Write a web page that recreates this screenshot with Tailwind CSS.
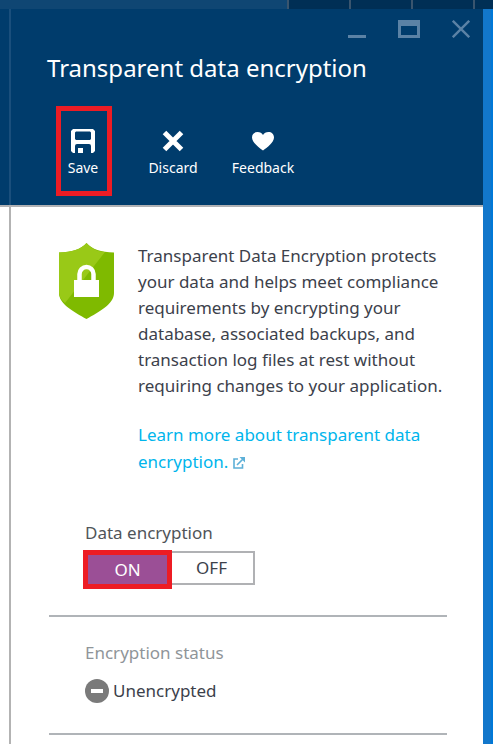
<!DOCTYPE html>
<html lang="en">
<head>
<meta charset="utf-8">
<meta name="viewport" content="width=device-width, initial-scale=1">
<title>Transparent data encryption</title>
<script src="https://cdn.jsdelivr.net/npm/@tailwindcss/browser@4"></script>
</head>
<body class="min-h-screen flex flex-col bg-white font-['Noto_Sans',sans-serif] text-[17px] text-[#3c414b]">
  <div class="h-[9px] flex bg-[#002f55]" aria-hidden="true">
    <div class="flex-1 bg-[#0f4673]"></div>
    <div class="w-[62px] border-l-2 border-[#3a556e]"></div>
    <div class="w-[62px] border-l-2 border-[#3a556e]"></div>
    <div class="w-[62px] border-l-2 border-[#3a556e]"></div>
    <div class="w-5 border-l-2 border-[#3a556e]"></div>
  </div>

  <div class="flex-1 flex">
    <div class="w-[11px] flex flex-col" aria-hidden="true">
      <div class="h-[196px] bg-[#003c6c] border-r-2 border-[#1a4f7c]"></div>
      <div class="h-[2px] bg-[#b0b1b4]"></div>
      <div class="flex-1 border-r-2 border-[#b3b3b3]"></div>
    </div>

    <section class="flex-1 flex flex-col">
      <header class="h-[198px] bg-[#003c6c] border-b-2 border-[#b0b1b4] text-white flex flex-col">
        <div class="flex justify-end gap-8 pt-[11px] pr-[13px] text-[#5b82a5]">
          <button type="button" aria-label="Minimize" class="w-[18px] h-[18px]">
            <svg viewBox="0 0 18 18" class="size-[18px]" fill="currentColor"><path d="M0 15h18v3H0z"/></svg>
          </button>
          <button type="button" aria-label="Maximize" class="w-[22px] h-[18px]">
            <svg viewBox="0 0 22 18" class="w-[22px] h-[18px]" fill="currentColor" fill-rule="evenodd"><path d="M0 0h22v18H0zM3 6v9h16V6z"/></svg>
          </button>
          <button type="button" aria-label="Close" class="size-[18px]">
            <svg viewBox="0 0 18 18" class="size-[18px]" fill="none" stroke="currentColor" stroke-width="2.4"><path d="M.8.8l16.4 16.4M17.2.8L.8 17.2"/></svg>
          </button>
        </div>
        <h1 class="pl-9 pt-[14px] text-2xl leading-8">Transparent data encryption</h1>
        <div class="flex pl-[45px] pt-[22px] text-sm leading-5">
          <button type="button" class="w-14 h-[90px] pr-0.5 border-5 border-[#ed1c24] flex flex-col items-center pt-[18px] gap-[5px]">
            <svg viewBox="0 0 24 24" class="size-6" fill="currentColor" fill-rule="evenodd"><path d="M2 0h20l2 2v20l-2 2h-2v-7q0-2-2-2H6q-2 0-2 2v7H2l-2-2V2zM5 2.500L4 3.500v6.500l1 1h14l1-1V3.500l-1-1zM7 19h5v5H7z"/></svg>
            <span>Save</span>
          </button>
          <button type="button" class="w-[60px] ml-[31px] h-[90px] flex flex-col items-center pt-[23px] gap-[5px]">
            <svg viewBox="0 0 24 24" class="size-6" fill="none" stroke="currentColor" stroke-width="5"><path d="M3.500 3.500l17 17M20.500 3.500l-17 17"/></svg>
            <span>Discard</span>
          </button>
          <button type="button" class="w-20 ml-5 h-[90px] flex flex-col items-center pt-[23px] gap-[5px]">
            <svg viewBox="0 0 24 24" class="size-6" fill="currentColor"><path d="M12 21.500C8 18.500 1 13.500 1 8.500C1 5 3.500 3 6.500 3C9 3 11 4 12 6C13 4 15 3 17.500 3C20.500 3 23 5 23 8.500C23 13.500 16 18.500 12 21.500z"/></svg>
            <span>Feedback</span>
          </button>
        </div>
      </header>

      <main class="pl-[38px] pr-9 pt-9 flex flex-col">
        <div class="flex gap-6 pl-2.5 pb-[46px]">
          <svg viewBox="0 0 55 76" class="w-[55px] h-[76px] shrink-0" aria-hidden="true">
            <path d="M27.500 0C33 6 42 9.500 55 9.500V50C55 61 40 69 27.500 76C15 69 0 61 0 50V9.500C13 9.500 22 6 27.500 0z" fill="#7fba00"/>
            <path d="M27.500 0C33 6 38 8.500 46 9L6 60C2 56.500 0 53.500 0 50V9.500C13 9.500 22 6 27.500 0z" fill="#99c917"/>
            <path d="M15 37h25v17H15z" fill="#fff"/>
            <path d="M20.500 38V31a7 7 0 0 1 14 0v7" fill="none" stroke="#fff" stroke-width="4.500"/>
          </svg>
          <div class="leading-[26px]">
            <p>Transparent Data Encryption protects<br>your data and helps meet compliance<br>requirements by encrypting your<br>database, associated backups, and<br>transaction log files at rest without<br>requiring changes to your application.</p>
            <p class="pt-[22px] leading-[27px]"><a href="#" class="text-[#00b5ec]">Learn more about transparent data<br>encryption.
              <svg viewBox="0 0 12 12" class="inline size-3" fill="none" stroke="#5db0d8" stroke-width="1.600" aria-hidden="true"><path d="M5 2H1v9h8.500V7M4 8l6-6"/><path d="M6.500 0H12v5.500z" fill="#5db0d8" stroke="none"/></svg></a></p>
          </div>
        </div>

        <fieldset class="pl-[34px] pb-[26px] border-b-2 border-[#b0b4b8]">
          <legend class="pl-0.5 leading-6 text-[#505459]">Data encryption</legend>
          <div class="flex items-start pt-[5px]">
            <label class="relative w-[89px] h-[39px] border-5 border-[#ed1c24] bg-[#9b4f96] text-white flex items-center justify-center cursor-pointer"><input type="radio" name="encryption" value="on" checked class="absolute inset-0 appearance-none">ON</label>
            <label class="relative w-[83px] h-[34px] mt-px pr-0.5 border-2 border-l-0 border-[#b0b1b4] flex items-center justify-center cursor-pointer"><input type="radio" name="encryption" value="off" class="absolute inset-0 appearance-none">OFF</label>
          </div>
        </fieldset>

        <section class="pl-9 pt-6 pb-[30px] border-b-2 border-[#b0b4b8]">
          <h2 class="leading-6 text-[#8f9599]">Encryption status</h2>
          <p class="pt-[14px] flex items-center gap-1 leading-6">
            <svg viewBox="0 0 24 24" class="size-6" aria-hidden="true"><circle cx="12" cy="12" r="12" fill="#7a7a7a"/><path d="M6 10h12v4H6z" fill="#fff"/></svg>
            Unencrypted
          </p>
        </section>
      </main>
    </section>

    <div class="w-2.5 flex" aria-hidden="true"><div class="w-2 bg-[#1277cb]"></div><div class="flex-1 bg-[#0078d7]"></div></div>
  </div>
</body>
</html>
